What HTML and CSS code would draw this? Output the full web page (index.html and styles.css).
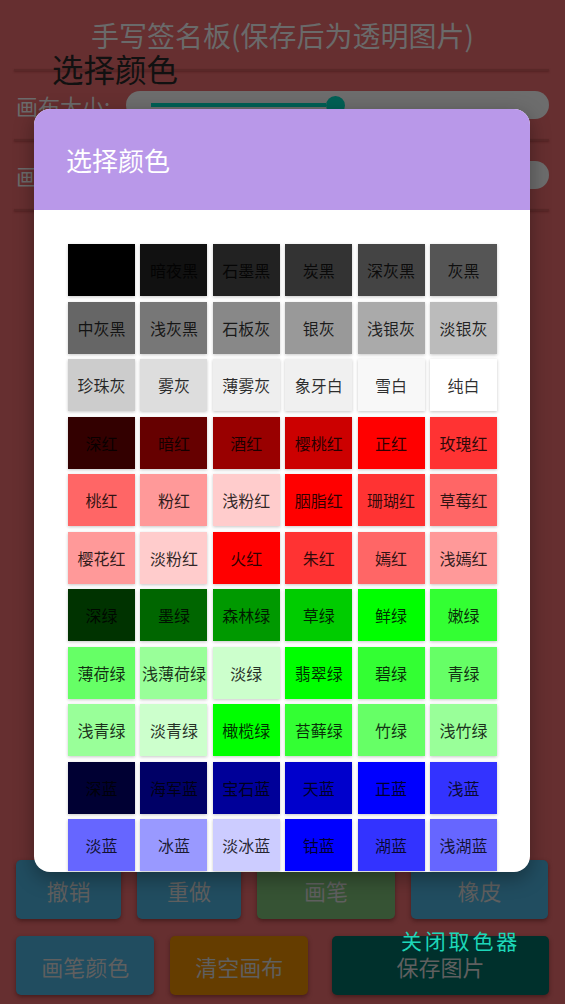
FILE: index.html
```html
<!DOCTYPE html>
<html lang="zh-CN">
<head>
<meta charset="utf-8">
<title>手写签名板</title>
<link rel="stylesheet" href="styles.css">
</head>
<body>
<div class="app">
  <header class="app-title">手写签名板(保存后为透明图片)</header>
  <div class="divider"></div>
  <div class="setting-row">
    <span class="setting-label">画布大小:</span>
    <div class="slider">
      <div class="slider-fill"></div>
      <div class="slider-thumb"></div>
    </div>
  </div>
  <div class="divider"></div>
  <div class="setting-row">
    <span class="setting-label">画笔大小:</span>
    <div class="slider">
      <div class="slider-fill"></div>
      <div class="slider-thumb"></div>
    </div>
  </div>
  <div class="divider"></div>
  <div class="canvas-area"></div>
  <div class="btn-row">
    <div class="btn btn-blue w-105">撤销</div>
    <div class="btn btn-blue w-104">重做</div>
    <div class="btn btn-green w-138">画笔</div>
    <div class="btn btn-blue w-137">橡皮</div>
  </div>
  <div class="btn-row row-2">
    <div class="btn btn-blue w-139">画笔颜色</div>
    <div class="btn btn-brown w-138">清空画布</div>
    <div class="btn btn-dark w-218">保存图片</div>
  </div>
</div>

<div class="floating-title">选择颜色</div>
<div class="close-picker">关闭取色器</div>

<div class="dialog">
  <div class="dialog-header">选择颜色</div>
  <div class="dialog-body">
    <div class="color-grid" id="grid"></div>
  </div>
</div>

<script src="app.js"></script>
</body>
</html>
```

FILE: styles.css
```css
* { box-sizing: border-box; }
html, body {
  margin: 0;
  padding: 0;
}
body {
  width: 565px;
  height: 1004px;
  overflow: hidden;
  position: relative;
  background: #662f30;
  font-family: "Noto Sans CJK SC", "Noto Sans", sans-serif;
}
.app {
  height: 1004px;
  display: flex;
  flex-direction: column;
}
.app-title {
  text-align: center;
  font-size: 28px;
  line-height: 40px;
  padding-top: 15px;
  color: #6a6a6a;
  height: 69px;
}
.divider {
  height: 2px;
  margin: 0 16px 0 14px;
  background: #592828;
  box-shadow: 0 1px 2px rgba(70, 25, 25, 0.6);
}
.setting-row {
  height: 68px;
  display: flex;
  align-items: center;
  padding: 0 16px;
}
.setting-label {
  width: 110px;
  font-size: 22px;
  color: #6b6b6b;
  white-space: nowrap;
}
.slider {
  flex: 1;
  height: 28px;
  border-radius: 14px;
  background: #6d6d6d;
  display: flex;
  align-items: center;
  padding: 0 24px 0 25px;
}
.slider-fill {
  width: 175px;
  height: 4px;
  background: #006055;
}
.slider-thumb {
  width: 19px;
  height: 19px;
  border-radius: 50%;
  background: #006055;
  flex: none;
}
.canvas-area { flex: 1; }
.btn-row {
  display: flex;
  gap: 16px;
  padding: 0 16px;
  height: 59px;
}
.row-2 {
  margin-top: 17px;
  margin-bottom: 9px;
}
.row-2 .btn:last-child { margin-left: 8px; }
.btn {
  border-radius: 5px;
  display: flex;
  align-items: center;
  justify-content: center;
  font-size: 22px;
  color: #5f5f5f;
  box-shadow: 0 2px 4px rgba(40, 10, 10, 0.5);
}
.btn-blue { background: #214d60; }
.btn-green { background: #365334; }
.btn-brown { background: #653d00; }
.btn-dark { background: #00302c; }
.w-105 { width: 105px; }
.w-104 { width: 104px; }
.w-138 { width: 138px; }
.w-137 { width: 137px; }
.w-139 { width: 139px; }
.w-218 { width: 218px; }

.floating-title {
  position: absolute;
  left: 52px;
  top: 46px;
  font-size: 31.5px;
  line-height: 44px;
  color: #111;
}
.close-picker {
  position: absolute;
  left: 401px;
  top: 925px;
  font-size: 21px;
  line-height: 30px;
  letter-spacing: 2.8px;
  color: #1dd6b8;
}

.dialog {
  position: absolute;
  left: 34px;
  top: 109px;
  width: 496px;
  height: 763px;
  border-radius: 16px;
  overflow: hidden;
  background: #fff;
  box-shadow: 0 6px 20px rgba(0, 0, 0, 0.35);
  display: flex;
  flex-direction: column;
}
.dialog-header {
  height: 101px;
  flex: none;
  background: #b998e9;
  color: #fff;
  font-size: 26px;
  display: flex;
  align-items: center;
  padding-left: 32px;
}
.dialog-body {
  flex: 1;
  overflow: hidden;
  padding: 34px 33px 0 34px;
}
.color-grid {
  display: grid;
  grid-template-columns: repeat(6, 67px);
  grid-auto-rows: 52px;
  column-gap: 5.4px;
  row-gap: 5.5px;
}
.cell {
  display: flex;
  align-items: center;
  justify-content: center;
  font-size: 16px;
  color: rgba(0, 0, 0, 0.82);
  box-shadow: 0 1px 3px rgba(0, 0, 0, 0.22);
  white-space: nowrap;
}
```

FILE: app.js
```js
var colors = [
  ["纯黑","#000000"],["暗夜黑","#111111"],["石墨黑","#222222"],["炭黑","#333333"],["深灰黑","#444444"],["灰黑","#555555"],
  ["中灰黑","#666666"],["浅灰黑","#777777"],["石板灰","#888888"],["银灰","#999999"],["浅银灰","#aaaaaa"],["淡银灰","#bbbbbb"],
  ["珍珠灰","#cccccc"],["雾灰","#dddddd"],["薄雾灰","#eeeeee"],["象牙白","#f0f0f0"],["雪白","#f8f8f8"],["纯白","#ffffff"],
  ["深红","#330000"],["暗红","#660000"],["酒红","#990000"],["樱桃红","#cc0000"],["正红","#ff0000"],["玫瑰红","#ff3333"],
  ["桃红","#ff6666"],["粉红","#ff9999"],["浅粉红","#ffcccc"],["胭脂红","#ff0000"],["珊瑚红","#ff3333"],["草莓红","#ff6666"],
  ["樱花红","#ff9999"],["淡粉红","#ffcccc"],["火红","#ff0000"],["朱红","#ff3333"],["嫣红","#ff6666"],["浅嫣红","#ff9999"],
  ["深绿","#003300"],["墨绿","#006600"],["森林绿","#009900"],["草绿","#00cc00"],["鲜绿","#00ff00"],["嫩绿","#33ff33"],
  ["薄荷绿","#66ff66"],["浅薄荷绿","#99ff99"],["淡绿","#ccffcc"],["翡翠绿","#00ff00"],["碧绿","#33ff33"],["青绿","#66ff66"],
  ["浅青绿","#99ff99"],["淡青绿","#ccffcc"],["橄榄绿","#00ff00"],["苔藓绿","#33ff33"],["竹绿","#66ff66"],["浅竹绿","#99ff99"],
  ["深蓝","#000033"],["海军蓝","#000066"],["宝石蓝","#000099"],["天蓝","#0000cc"],["正蓝","#0000ff"],["浅蓝","#3333ff"],
  ["淡蓝","#6666ff"],["冰蓝","#9999ff"],["淡冰蓝","#ccccff"],["钴蓝","#0000ff"],["湖蓝","#3333ff"],["浅湖蓝","#6666ff"]
];
var grid = document.getElementById("grid");
colors.forEach(function (c) {
  var d = document.createElement("div");
  d.className = "cell";
  d.style.background = c[1];
  d.textContent = c[0];
  grid.appendChild(d);
});
```
